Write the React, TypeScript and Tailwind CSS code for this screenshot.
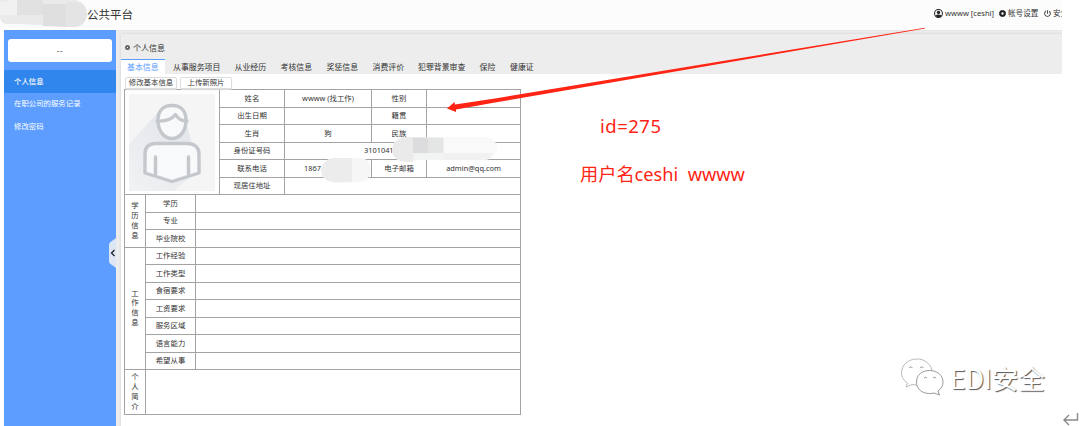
import React from 'react';
import { FaPowerOff } from 'react-icons/fa6';

const tabs = ['基本信息', '从事服务项目', '从业经历', '考核信息', '奖惩信息', '消费评价', '犯罪背景审查', '保险', '健康证'];
const tabWidths = ['w-[44px]', 'w-[61.5px]', 'w-[46px]', 'w-[46px]', 'w-[46px]', 'w-[45.5px]', 'w-[61.500px]', 'w-[30.500px]', 'w-[37px]'];
const workRows = ['工作经验', '工作类型', '食宿要求', '工资要求', '服务区域', '语言能力', '希望从事'];
const studyRows = ['学历', '专业', '毕业院校'];

function Cell({ children, className = '' }: { children?: React.ReactNode; className?: string }) {
  return (
    <div className={`flex items-center justify-center whitespace-nowrap border-b border-r border-[#a3a3a3] ${className}`}>
      {children}
    </div>
  );
}

function Vertical({ text, className = '' }: { text: string; className?: string }) {
  return (
    <Cell className={`flex-col leading-[9.8px] ${className}`}>
      {text.split('').map((c, i) => (
        <span key={i}>{c}</span>
      ))}
    </Cell>
  );
}

function Avatar() {
  return (
    <svg viewBox="0 0 86 97" className="h-[97px] w-[86px]">
      <defs>
        <linearGradient id="shade" x1="1" y1="0" x2="0" y2="1">
          <stop offset="0" stopColor="#dfe3e8" />
          <stop offset="1" stopColor="#f1f2f4" />
        </linearGradient>
      </defs>
      <rect width="86" height="97" fill="#f5f5f5" />
      <path d="M32 15L0 50V97H45L70 75L56 25Z" fill="url(#shade)" />
      <g fill="#f8f9fa" stroke="#c4c8cc" strokeWidth="3.4" strokeLinejoin="round" strokeLinecap="round">
        <path d="M29 26C29 17 34 11.500 43 11.500S57 17 57 26C57 37 51 44.500 43 44.500S29 37 29 26Z" />
        <path d="M28 27C36 27.500 43 25 46.500 20.500C49 25 52 27 58 27" fill="none" />
        <path d="M16 79V60C16 53 20 49.500 27 49.500H58C65 49.500 70 53 70 60V79L43 87.500Z" />
        <path d="M26.500 63V80M59.500 63V80" fill="none" />
      </g>
    </svg>
  );
}

export default function App() {
  return (
    <div className="relative h-[426px] w-[1080px] overflow-hidden bg-white font-['Noto_Sans','Noto_Sans_CJK_SC',sans-serif] text-[7.4px] text-[#333]">
      <header className="flex h-[30px] w-[1062px] items-center overflow-hidden bg-[#fcfcfc]">
        <svg viewBox="0 0 87 30" className="h-[30px] w-[87px] shrink-0">
          <path d="M0 0H76Q87 3 87 14Q85 27 73 27L20 24H5Q0 22 0 16Z" fill="#eaeaea" />
          <path d="M0 2Q7 0 17 0V15H0Z" fill="#f1f1f1" />
          <path d="M17 0H43V15H17Z" fill="#e1e1e1" />
          <path d="M43 4H66V27L43 26Z" fill="#dfdfdf" />
          <path d="M66 2H76Q87 4 87 15Q85 27 73 27H66Z" fill="#e4e4e4" />
        </svg>
        <h1 className="text-[11.5px] leading-[18px]">公共平台</h1>
        <nav className="ml-auto flex w-[128px] shrink-0 items-center overflow-hidden whitespace-nowrap pb-[2px] text-[7.6px]">
          <svg viewBox="0 0 16 16" className="mr-[2px] size-[9px] shrink-0">
            <circle cx="8" cy="8" r="7" fill="none" stroke="#222" strokeWidth="1.8" />
            <circle cx="8" cy="6" r="3" fill="#222" />
            <path d="M2.500 11.500Q8 8 13.500 11.500Q11.500 15 8 15T2.500 11.500Z" fill="#222" />
          </svg>
          <span className="w-[54px] shrink-0">wwww [ceshi]</span>
          <svg viewBox="0 0 14 14" className="mr-[2px] size-[7px] shrink-0">
            <circle cx="7" cy="7" r="4.400" fill="none" stroke="#222" strokeWidth="4" />
            <circle cx="7" cy="7" r="6.300" fill="none" stroke="#222" strokeWidth="1.400" strokeDasharray="3 1.950" />
          </svg>
          <span className="w-[36px] shrink-0">帐号设置</span>
          <FaPowerOff className="mr-[2px] size-[7px] shrink-0" />
          <span>安全</span>
        </nav>
      </header>

      <div className="flex h-[396px] pl-1">
        <aside className="relative w-[112px] shrink-0 bg-[#5c9dff] text-white">
          <div className="mx-1 mt-[9px] flex h-[23px] items-center justify-center rounded-[3px] bg-white text-[8px] tracking-[0.6px] text-[#555]">--</div>
          <ul className="mt-2">
            <li className="flex h-[23px] items-center bg-[#3186ee] pl-[10px] font-medium">个人信息</li>
            <li className="flex h-[22px] items-center pl-[10px]">在职公司的服务记录</li>
            <li className="flex h-[23px] items-center pl-[10px]">修改密码</li>
          </ul>
          <svg viewBox="0 0 7 30" className="absolute right-0 top-[208px] h-[30px] w-[7px]">
            <path d="M7 0L1.500 4Q0 5 0 7V23Q0 25 1.500 26L7 30Z" fill="#dce6f5" />
            <path d="M5.500 12L2.500 15L5.500 18" fill="none" stroke="#222" strokeWidth="1.3" />
          </svg>
        </aside>

        <main className="w-[946px] overflow-hidden border-t border-[#e6e6e6] bg-[#ededed] pl-[5px]">
          <div className="-mr-1 mt-[3px] h-full bg-white shadow-[0_0_3px_#cfcfcf]">
            <div className="h-[40px] bg-[#ededed]">
              <div className="flex h-[25px] items-center pl-1 pt-[2px] text-[8px]">
                <span className="mr-[3px] flex size-[5px] items-center justify-center rounded-full bg-[#666]">
                  <span className="size-px bg-white" />
                </span>
                个人信息
              </div>
              <div className="flex h-[15px] whitespace-nowrap text-[7.9px] leading-[16px]">
                {tabs.map((t, i) => (
                  <div
                    key={t}
                    className={`shrink-0 ${tabWidths[i]} ${i === 0 ? 'mr-[8px] border-t border-[#5c9dff] bg-white pl-[6px] leading-[14px] text-[#5c9dff]' : ''}`}
                  >
                    {t}
                  </div>
                ))}
              </div>
            </div>
            <div className="flex h-[15px] items-start gap-[3px] pl-[4px] pt-[3px] leading-none">
              <button className="flex h-[12px] w-[52px] items-center justify-center rounded-[2px] border border-[#ddd] bg-white shadow-[0_1px_1px_#ddd]">修改基本信息</button>
              <button className="flex h-[12px] w-[52px] items-center justify-center rounded-[2px] border border-[#ddd] bg-white shadow-[0_1px_1px_#ddd]">上传新照片</button>
            </div>

            <section className="ml-[3px] w-[397px] border-l border-t border-[#a3a3a3]">
              <div className="grid grid-cols-[95px_65px_87px_55px_94px] grid-rows-[repeat(6,17.5px)]">
                <Cell className="row-span-6"><Avatar /></Cell>
                <Cell>姓名</Cell><Cell>wwww (找工作)</Cell><Cell>性别</Cell><Cell />
                <Cell>出生日期</Cell><Cell /><Cell>籍贯</Cell><Cell />
                <Cell>生肖</Cell><Cell>狗</Cell><Cell>民族</Cell><Cell />
                <Cell>身份证号码</Cell>
                <Cell className="col-span-3 !justify-start pl-[79px]">3101041</Cell>
                <Cell>联系电话</Cell><Cell className="!justify-start pl-[19px]">1867</Cell><Cell>电子邮箱</Cell><Cell>admin@qq.com</Cell>
                <Cell>现居住地址</Cell><Cell className="col-span-3" />
              </div>
              <div className="grid grid-cols-[21px_50px_325px] grid-rows-[repeat(10,17.5px)_45px]">
                <Vertical text="学历信息" className="row-span-3" />
                {studyRows.map((r) => (
                  <React.Fragment key={r}><Cell>{r}</Cell><Cell /></React.Fragment>
                ))}
                <Vertical text="工作信息" className="row-span-7" />
                {workRows.map((r) => (
                  <React.Fragment key={r}><Cell>{r}</Cell><Cell /></React.Fragment>
                ))}
                <Vertical text="个人简介" />
                <Cell className="col-span-2" />
              </div>
            </section>
          </div>
        </main>
      </div>

      <svg viewBox="0 0 1080 426" className="pointer-events-none absolute inset-0 h-[426px] w-[1080px]">
        <path d="M403 137H486Q497 139 497 148Q495 160 484 160H419Q414 163 402 162Q392 159 392 149Q393 140 403 137Z" fill="#f9f9f9" />
        <path d="M403 137H413V162Q392 163 392 149Q393 140 403 137Z" fill="#eaeaea" />
        <path d="M413 137.500H428V153H413Z" fill="#dcdcde" />
        <path d="M428 137.500H443.500V153H428Z" fill="#e4e6e6" />
        <path d="M413 153H443V160H413Z" fill="#f2f4f4" />
        <path d="M443 153H493Q490 160 484 160H443Z" fill="#f1f1f1" />
        <path d="M333 158H363Q371 161 371 170Q370 181 360 182L335 183Q321 181 321 169Q323 160 333 158Z" fill="#f6f6f6" />
        <path d="M333 158H352V182H335Q321 181 321 169Q323 160 333 158Z" fill="#ececec" />
        <path d="M925 27.800L495 98.500L455 104.500L454.500 102L447 108.500L456 112L456 109.500L495 102.500L925 28.600Z" fill="#ff2414" />
      </svg>

      <p className="absolute left-[600px] top-[113px] whitespace-nowrap text-[18.5px] leading-[26px] tracking-[0.5px] text-[#ff2414]">id=275</p>
      <p className="absolute left-[580px] top-[161px] whitespace-pre text-[18.2px] leading-[26px] text-[#ff2414]">用户名ceshi  wwww</p>

      <div className="absolute left-[900px] top-[356px] flex items-center">
        <svg viewBox="0 0 45 40" className="h-[40px] w-[45px]" fill="white" stroke="#999" strokeWidth="1" strokeLinejoin="round">
          <path d="M17 3C8 3 1.500 9 1.500 17C1.500 21 4 25 7.500 27L6 31L12 28.500Q18 30 23 28C29 26 33 21 32 14C30 7 24 3 17 3Z" stroke="#bbb" />
          <path d="M29.500 14.500C22 14.500 16.500 19 16.500 26C16.500 33 22 37.500 29.500 37.500Q32 37.500 34 37L39.500 39L38 35C41 33 43 30 43 26C43 19 37 14.500 29.500 14.500Z" />
          <path d="M9 12A2 2 0 0 1 12.500 12M20 12A2 2 0 0 1 23.500 12M24 22A2 2 0 0 1 27 22M33 22A2 2 0 0 1 36 22" fill="none" />
        </svg>
        <span className="ml-[5px] mt-[3px] whitespace-nowrap font-['Noto_Sans_CJK_SC',sans-serif] text-[26.6px] leading-[36px] text-white [text-shadow:1px_1px_1px_#555]">EDI安全</span>
      </div>
      <svg viewBox="0 0 18 16" className="absolute left-[1062px] top-[411px] h-[16px] w-[18px]" fill="none" stroke="#888" strokeWidth="1.4">
        <path d="M15.500 2V9H2.500M7 4L2 9L7 14" />
      </svg>
    </div>
  );
}
